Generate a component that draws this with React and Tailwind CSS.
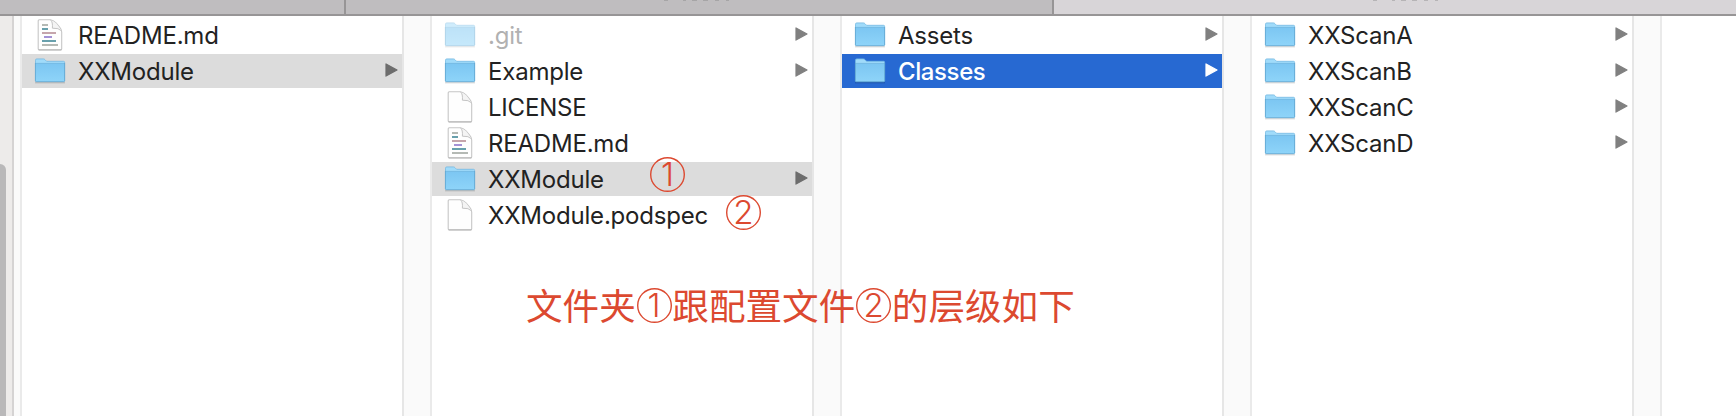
import React from "react";

function Folder({ dim }) {
  return (
    <svg width="32" height="26" viewBox="0 0 32 26" className={dim ? "opacity-50" : ""}>
      <defs>
        <linearGradient id="folderFront" x1="0" y1="0" x2="0" y2="1">
          <stop offset="0" stopColor="#7cc6f2" />
          <stop offset="1" stopColor="#8ed4f9" />
        </linearGradient>
      </defs>
      <path d="M1 24.7H31" stroke="#000" strokeOpacity=".14" strokeWidth="1.4" />
      <path d="M1.5 23V2.2Q1.5.9 2.8.9H9.4Q10.3.9 11 1.7L12.6 3.3H29.6Q30.6 3.3 30.6 4.4V23Z" fill="#a0dbfa" stroke="#74b9e2" strokeWidth=".8" />
      <path d="M1.4 5.4H30.6V22.8Q30.6 23.8 29.6 23.8H2.4Q1.4 23.8 1.4 22.8Z" fill="url(#folderFront)" />
      <path d="M1.4 5.4H30.6" stroke="#6fb5de" strokeWidth=".8" />
      <path d="M1.4 5V22.8Q1.4 23.7 2.4 23.7H29.6Q30.6 23.7 30.6 22.8V5" fill="none" stroke="#5fa5cf" strokeWidth=".8" />
    </svg>
  );
}

function Doc({ lines }) {
  return (
    <svg width="26" height="32" viewBox="0 0 26 32">
      <path d="M1.2 1.8Q1.2.8 2.2.8H13.5Q16 1 19 4L22.4 7.8Q24.7 10.3 24.7 13V29.8Q24.7 30.8 23.7 30.8H2.2Q1.2 30.8 1.2 29.8Z" fill="#fefefe" stroke="#c6c6c6" strokeWidth="1.1" />
      <path d="M1.6 31H24.4" stroke="#b2b2b2" strokeWidth="1" />
      <path d="M13.6 1Q16 2.2 15.4 9.2Q22 8.6 24.4 11.6L19 4Z" fill="#f4f4f4" />
      <path d="M13.6.9Q15.9 3 15.4 9.2Q21.8 8.8 24.5 11.8" fill="none" stroke="#c4c4c4" strokeWidth="1" />
      {lines && (
        <g strokeWidth="1.8">
          <path d="M5 6H11M5 26H21" stroke="#b4b9b4" />
          <path d="M5 10H11M5 22H19" stroke="#68a0ac" />
          <path d="M5 14H19" stroke="#bf9ba3" />
          <path d="M7 18H15" stroke="#9a86d2" />
        </g>
      )}
    </svg>
  );
}

function Row({ name, kind = "folder", dim, state }) {
  const box =
    state === "active" ? "bg-[#2769d2] text-white font-medium" : state === "path" ? "bg-[#dcdcdc] text-[#222]" : dim ? "text-[#b1b1b1]" : "text-[#222]";
  const spacing = state === "active" ? "tracking-[-0.4px]" : "tracking-[-0.2px]";
  const arrow = state === "active" ? "#fff" : state === "path" ? "#6d6d6d" : "#808080";
  return (
    <div className={"flex h-[34px] items-center pr-1 pl-3 " + box}>
      <span className="flex h-[34px] w-8 shrink-0 items-center justify-center">
        {kind === "folder" ? <Folder dim={dim} /> : <Doc lines={kind === "text"} />}
      </span>
      <span className={"ml-3 grow pt-0.5 text-[24px] leading-[34px] whitespace-nowrap " + spacing}>{name}</span>
      {kind === "folder" && (
        <svg width="13" height="14" viewBox="0 0 13 14" className="mb-[2px] shrink-0">
          <path d="M1 .9L12 7L1 13.1Z" fill={arrow} stroke={arrow} strokeWidth="1.2" strokeLinejoin="round" />
        </svg>
      )}
    </div>
  );
}

function ClippedTitle() {
  return (
    <svg width="74" height="2" viewBox="0 0 74 2" className="block">
      <path d="M1 .5H5M20 .5H23M29 .5H34M40 .5H45M52 .5H56M63 .5H66" stroke="#777" strokeOpacity=".35" strokeWidth="1" />
    </svg>
  );
}

const columns = [
  [
    { name: "README.md", kind: "text" },
    { name: "XXModule", state: "path" },
  ],
  [
    { name: ".git", dim: true },
    { name: "Example" },
    { name: "LICENSE", kind: "blank" },
    { name: "README.md", kind: "text" },
    { name: "XXModule", state: "path" },
    { name: "XXModule.podspec", kind: "blank" },
  ],
  [{ name: "Assets" }, { name: "Classes", state: "active" }],
  [{ name: "XXScanA" }, { name: "XXScanB" }, { name: "XXScanC" }, { name: "XXScanD" }],
];

function Circled({ children }) {
  return (
    <span className="flex size-[35px] shrink-0 items-center justify-center rounded-full text-[33px] leading-[35px] font-light text-[#dc4930] shadow-[inset_0_0_0_1.4px_#dc4930] font-['Inter',sans-serif]">
      {children}
    </span>
  );
}

export default function App() {
  return (
    <div className="relative flex h-[416px] w-[1736px] flex-col overflow-hidden bg-white font-['Inter','Noto_Sans_CJK_SC',sans-serif]">
      <div className="flex h-4 shrink-0 border-b-2 border-[#979596] bg-[#bfbdbf]">
        <div className="w-[346px] border-r-2 border-[#979596]" />
        <div className="w-[708px] border-r-2 border-[#979596] pl-[317px]">
          <ClippedTitle />
        </div>
        <div className="grow bg-[#d8d5d8] pl-[318px]">
          <ClippedTitle />
        </div>
      </div>
      <div className="flex grow">
        <div className="flex w-[14px] shrink-0 items-end border-r-2 border-[#d5d3d3] bg-[#edebea]">
          <div className="h-[252px] w-1.5 rounded-tr-md bg-[#b9b8b9]" />
        </div>
        <div className="w-2 shrink-0 border-r-2 border-[#eaeaea] bg-[#fafafa]" />
        {columns.map((rows, i) => (
          <React.Fragment key={i}>
            <div className="flex w-[380px] shrink-0 flex-col gap-0.5 pt-0.5">
              {rows.map((r) => (
                <Row key={r.name} {...r} />
              ))}
            </div>
            <div className="w-[30px] shrink-0 border-r-2 border-l-2 border-r-[#eaeaea] border-l-[#e6e6e6] bg-[#fafafa]" />
          </React.Fragment>
        ))}
      </div>
      <div className="absolute top-[157px] left-[650px]">
        <Circled>1</Circled>
      </div>
      <div className="absolute top-[195px] left-[726px]">
        <Circled>2</Circled>
      </div>
      <div className="absolute top-[287px] left-[526px] flex items-center text-[36.6px] leading-9 whitespace-nowrap text-[#dc4930] font-['Noto_Sans_CJK_SC',sans-serif]">
        <span>文件夹</span>
        <span className="flex w-[36.6px] justify-center">
          <Circled>1</Circled>
        </span>
        <span>跟配置文件</span>
        <span className="flex w-[36.6px] justify-center">
          <Circled>2</Circled>
        </span>
        <span>的层级如下</span>
      </div>
    </div>
  );
}
